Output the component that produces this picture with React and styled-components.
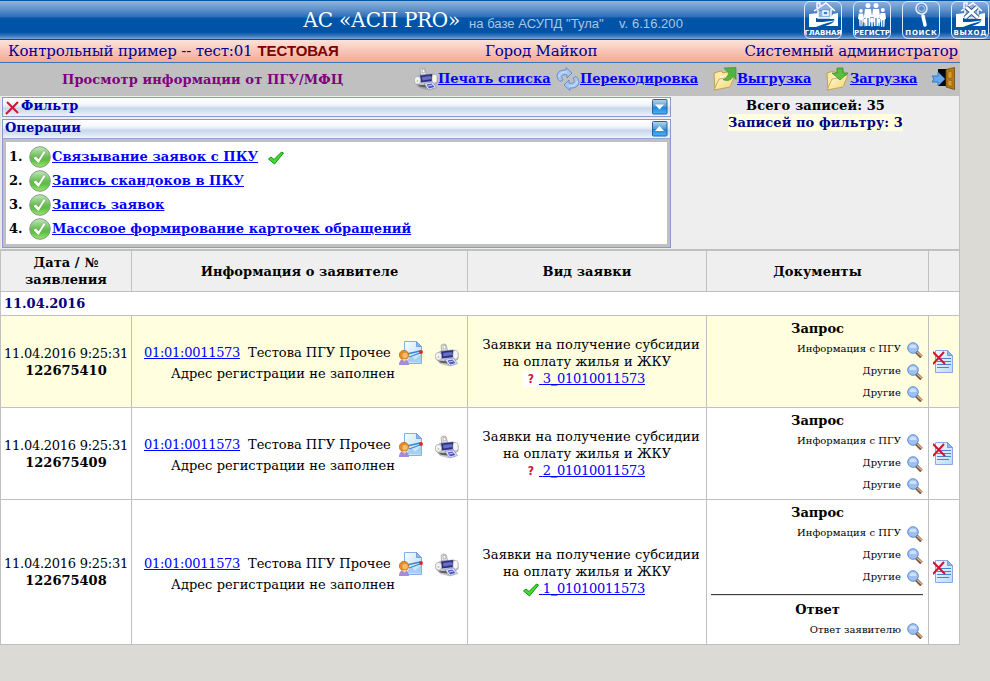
import React from 'react';
import styled, { createGlobalStyle } from 'styled-components';

const Global = createGlobalStyle`
  * { box-sizing: border-box; }
  body { margin: 0; background: #dbdad5; overflow: hidden; font: 13px/17px "DejaVu Serif", serif; color: #000; }
  svg { display: block; flex: none; }
`;

const Page = styled.div`min-height: 681px; white-space: nowrap;`;

/* ---------- top banner ---------- */
const Banner = styled.header`
  height: 40px; display: flex; align-items: center; padding-left: 303px; padding-right: 1px;
  border-top: 1px solid #0054a4; border-bottom: 1px solid #00509c;
  background: linear-gradient(#90b4de 0, #5c8fca 9px, #2b6db6 16px, #0055a8 17px, #0052a5 31px, #3b78bd 35px, #7da5d6 38px);
`;
const Title = styled.h1`margin: 0; width: 166px; font-size: 20px; font-weight: 400; line-height: 36px; letter-spacing: -0.3px; color: #fff;`;
const Subtitle = styled.span`
  width: ${p => p.$w}px; padding-top: 6px; font: 13px/17px "Liberation Sans", sans-serif; letter-spacing: 0.05px; color: #a9c6e8;
`;
const NavList = styled.nav`margin-left: auto; display: flex; gap: 11px; height: 38px;`;
const NavButton = styled.a`
  width: 38px; height: 38px; display: flex; flex-direction: column; align-items: center; overflow: hidden;
  border: 1px solid #dce9f8; border-radius: 6px; color: #fff;
`;
const NavLabel = styled.span`
  font: bold 7px/9px "DejaVu Sans", sans-serif; letter-spacing: ${p => p.$gap}px; margin-right: -${p => Math.max(p.$gap, 0)}px; margin-top: 1px;
`;

/* ---------- info strip and toolbar ---------- */
const InfoBar = styled.div`
  width: 960px; height: 23px; display: grid; grid-template-columns: 485px 1fr auto; align-items: center;
  padding: 0 2px 0 0; border-bottom: 1px solid #4076af; font-size: 15px; line-height: 20px; letter-spacing: -0.17px; color: #000099;
  background: linear-gradient(#fbe2da, #f4a994);
`;
const InfoBase = styled.span`padding-left: 8px; display: flex; gap: 5px;`;
const TestMark = styled.b`font: bold 15px/20px "Liberation Sans", sans-serif; letter-spacing: -0.05px; color: #800000;`;

const Toolbar = styled.div`
  width: 960px; height: 33px; display: flex; align-items: center; background: #c0c0c0;
`;
const PageTitle = styled.h2`margin: 0; padding-left: 62px; width: 414px; font-size: 13px; line-height: 17px; letter-spacing: 0.1px; color: #800080;`;
const ToolItem = styled.div`width: ${p => p.$w}px; display: flex; align-items: center; padding-bottom: 1px; letter-spacing: ${p => p.$track || 0}px;`;
const Link = styled.a`color: #0000ff; text-decoration: underline;`;
const CodeLink = styled(Link)`letter-spacing: -0.28px;`;
const ToolLink = styled(Link)`font-weight: bold; line-height: 17px; padding-bottom: 1px;`;

/* ---------- filter panels ---------- */
const Upper = styled.section`
  width: 960px; height: 154px; display: flex; background: #eee;
  border-right: 1px solid #c0c0c0; border-bottom: 1px solid #c0c0c0; border-left: 1px solid #e4e4e4;
`;
const Panels = styled.div`width: 670px; padding: 1px 0 0 1px; display: flex; flex-direction: column; gap: 2px;`;
const Panel = styled.div`border: 1px solid #879bcb; background: #c0c0c0;`;
const PanelHead = styled.div`
  height: ${p => p.$h}px; display: flex; align-items: center; padding: 0 2px 0 2px;
  font-weight: bold; color: #0000b0;
  border-bottom: ${p => (p.$line ? '1px solid #8fabd4' : '0')};
  background: linear-gradient(#fff 0, #f4f8fc 6px, #dce7f2 9px, #c7d7ea 10px, #d7e3f0 14px, #eef4fa 18px);
`;
const PanelName = styled.span`flex: 1; height: 19px; line-height: 16px; letter-spacing: 0.05px;`;
const Operations = styled.ol`
  margin: 3px; height: 102px; padding: 3px 3px; list-style: none; background: #fff; font-weight: bold; letter-spacing: 0.06px;
`;
const Operation = styled.li`height: 24px; display: flex; align-items: center;`;
const Num = styled.span`width: 19px; line-height: 17px; padding-bottom: 1px;`;
const DoneMark = styled.span`padding-left: 10px; padding-top: 1px;`;
const Totals = styled.div`flex: 1; padding-top: 1px; display: flex; flex-direction: column; align-items: center; font-weight: bold; letter-spacing: 0.08px; margin-right: -1px;`;
const Filtered = styled.span`background: #ffffe0; color: #000080;`;

/* ---------- requests table ---------- */
const Table = styled.div`
  width: 960px; display: grid; grid-template-columns: 130px 335px 238px 221px 30px; gap: 1px;
  padding: 1px; background: #c0c0c0;
`;
const Cell = styled.div`
  min-height: ${p => p.$h}px; display: flex; flex-direction: column; justify-content: center; align-items: center; text-align: center;
  padding-bottom: ${p => p.$bottom || 0}px; background: ${p => (p.$hot ? '#ffffe0' : '#fff')};
`;
const HeadCell = styled(Cell)`background: #efefef; font-weight: bold; letter-spacing: 0.06px;`;
const DayRow = styled.div`
  grid-column: 1 / -1; height: 23px; padding-left: 3px; line-height: 23px; font-weight: bold; color: #000080; background: #fff;
`;
const DateTime = styled.span`letter-spacing: -0.26px;`;
const Kind = styled.span`letter-spacing: ${p => p.$track}px;`;
const InfoCell = styled(Cell)`align-items: stretch; text-align: left;`;
const Person = styled.div`height: 26px; display: flex; align-items: center; padding-left: 12px;`;
const PersonCode = styled.span`width: 96px; padding-bottom: 1px;`;
const PersonName = styled.span`width: 159px; padding-left: 8px; padding-bottom: 1px;`;
const IconSlot = styled.span`width: ${p => p.$w}px; padding-top: ${p => p.$top || 0}px;`;
const Address = styled.div`padding-left: 39px; height: 17px; line-height: 15px; letter-spacing: 0.06px;`;
const RequestLine = styled.div`height: 17px; display: flex; align-items: center; padding-right: 6px;`;
const MarkSlot = styled.span`padding-top: ${p => (p.$low ? 3 : 1)}px;`;
const Docs = styled(Cell)`justify-content: flex-start; align-items: stretch; padding: 4px 5px 3px 4px;`;
const DocTitle = styled.b`line-height: 17px; height: 18px; padding-left: 1px;`;
const DocRow = styled.div`
  height: 22px; display: flex; align-items: center; justify-content: flex-end; gap: 6px; font-size: 10px; line-height: 14px; letter-spacing: 0.05px;
`;
const DocIcon = styled.span`padding-top: 1px;`;
const Rule = styled.hr`width: 100%; height: 2px; margin: 6px 0 5px; border: 0; border-top: 1px solid #404040; border-bottom: 1px solid #dedede;`;
const DeleteCell = styled(Cell)`align-items: flex-start; padding-left: 4px;`;

/* ---------- icons ---------- */
const Printer = () => (
  <svg width="24" height="24" viewBox="0 0 24 24">
    <path d="M3 18l4-1 14 1-1 4-7 1-8-2z" fill="#777" opacity=".4" />
    <path d="M6 2.500l2-1.500 3 .5L13 9l-6 1z" fill="#e4e4e6" stroke="#999" strokeWidth=".7" />
    <path d="M8 2.500h2.500l.5 3-2.500.5z" fill="#fff" stroke="#999" strokeWidth=".6" />
    <path d="M1 11l5-3 13-1 4 3v6l-5 3-13 .5-4-3.500z" fill="#c9c9d2" stroke="#8b8b93" strokeWidth=".7" />
    <path d="M6 8.500l12-1.500 1.500 7-13 1.500z" fill="#2f2f8a" />
    <path d="M8 10l8.500-1 1.500 3-9.500 1.500z" fill="#6671c0" />
    <rect x=".5" y="9.500" width="6" height="7.500" rx="2.800" fill="#f3f3f4" stroke="#999" strokeWidth=".5" />
    <rect x="18" y="7.500" width="5" height="8.500" rx="2.300" fill="#f6f6f8" stroke="#999" strokeWidth=".5" />
    <path d="M3 17.500l5 .5 4-.5v3l-5-.5z" fill="#5f5f66" />
    <path d="M10 16.500l8.500-1.500 4 5.500-8 2.500z" fill="#e6e9ff" stroke="#777eb5" strokeWidth=".6" />
    <path d="M12.500 17.500l5-1 3 3.500-5.500 1.500z" fill="#4f58bd" /><path d="M14 19l4.500-1" stroke="#c9cffa" />
    <circle cx="3.500" cy="14" r=".8" fill="#93b855" />
  </svg>
);
const Recycle = () => (
  <svg width="24" height="24" viewBox="0 0 24 24" fill="#a5c5ef" stroke="#5f8bcb" strokeWidth=".9" strokeLinejoin="round">
    <path d="M4 14.500C-1.500 10 1 2 10 3V.5L16 6l-5 5V8C6 7 4.500 9 7 13z" />
    <path d="M20 9.500c5.500 4.500 3 12.500-6 11.500v2.500L8 18l5-5v3c5 1 6.500-1 4-5z" />
    <path d="M3 10c0-3 3-5.500 8-5M21 14c0 3-3 5.500-8 5" fill="none" stroke="#dceaff" />
  </svg>
);
const Folder = ({ out }) => (
  <svg width="24" height="24" viewBox="0 0 24 24">
    <defs><linearGradient id="folder" x2="1" y2="1"><stop stopColor="#fffbd8" /><stop offset="1" stopColor="#f2d272" /></linearGradient></defs>
    <path d="M1 6l7-2 2 2 8-2v13L2 23z" fill="#fbeca4" stroke="#b99034" strokeWidth=".8" />
    <path d="M7 9h11v11H6z" fill="#f9f6dc" />
    <path d="M1 23l5-11 6-1 2-2 8-1-5 12z" fill="url(#folder)" stroke="#c29a3a" strokeWidth=".8" />
    {out
      ? <path d="M11 1l12-.5v12l-3-3c-2 4-6 5-10 3 4-1 6-4 5-7z" fill="#43b133" stroke="#278c24" strokeWidth=".7" opacity=".88" />
      : <path d="M11 1h6v5h5l-8 7-8-7h5z" fill="#4fbd36" stroke="#278c24" strokeWidth=".8" opacity=".93" />}
  </svg>
);
const Door = () => (
  <svg width="24" height="24" viewBox="0 0 24 24">
    <path d="M6 2h12v17H6z" fill="#050505" />
    <path d="M14 2.500L22.500.5v22L14 20z" fill="#b87912" stroke="#704709" strokeWidth=".8" />
    <path d="M16 5l4-1v7l-4 .5zm0 8l4 .5v6l-4-1z" fill="#d89b2d" stroke="#875a13" strokeWidth=".6" />
    <path d="M0 9h6V5l7 7-7 7v-4H0l2-3z" fill="#62a7ef" stroke="#256bb7" strokeWidth=".8" />
  </svg>
);
const Cross = () => (
  <svg width="16" height="16" viewBox="0 0 16 16"><path d="M2 3l11 11M13 3L1 15" stroke="#d01432" strokeWidth="2" fill="none" /></svg>
);
const Tick = () => (
  <svg width="16" height="16" viewBox="0 0 16 16"><path d="M.5 9l2.500-2L6 9.500 13.500 2l2 1L6.500 14z" fill="#42dc2c" stroke="#109216" strokeWidth="1" strokeLinejoin="round" /></svg>
);
const RoundTick = () => (
  <svg width="24" height="24" viewBox="0 0 24 24">
    <defs><linearGradient id="disc" x2="0" y2="1"><stop stopColor="#c5e8bd" /><stop offset=".5" stopColor="#68bd54" /><stop offset=".65" stopColor="#57c03f" /><stop offset="1" stopColor="#a5e675" /></linearGradient></defs>
    <circle cx="12" cy="12" r="10.300" fill="url(#disc)" stroke="#829e80" strokeWidth="1" />
    <path d="M5 13l3-2 2.500 3L15.500 5.500 18 7l-7.500 11.500z" fill="#fff" stroke="#4c9b40" strokeWidth=".5" />
  </svg>
);
const Fold = ({ up }) => (
  <svg width="16" height="16" viewBox="0 0 16 16">
    <defs><linearGradient id="fold" x2="0" y2="1"><stop stopColor="#b8d6f2" /><stop offset=".5" stopColor="#5398da" /><stop offset=".55" stopColor="#2186d9" /><stop offset="1" stopColor="#4bb4ff" /></linearGradient></defs>
    <rect x=".5" y=".5" width="14.500" height="14.500" rx="1" fill="url(#fold)" stroke="#24639f" />
    <path d={up ? 'M3 10l4.500-5 4.500 5z' : 'M3 5.500l4.500 5 4.500-5z'} fill="#fff" />
  </svg>
);
const Magnifier = () => (
  <svg width="16" height="16" viewBox="0 0 16 16">
    <path d="M9 9.500l5.500 5.500" stroke="#76533d" strokeWidth="3.500" /><path d="M10 10l5 4.500" stroke="#dcb68d" strokeWidth="1.400" />
    <circle cx="6" cy="6" r="5.300" fill="#9dbff4" stroke="#6090ce" /><path d="M2.500 6a3.500 3.500 0 017 0z" fill="#cfe0fc" />
  </svg>
);
const SheetGradient = () => (
  <defs><linearGradient id="sheet" x2="1" y2="1"><stop stopColor="#f7fcff" /><stop offset="1" stopColor="#b8daf7" /></linearGradient></defs>
);
const Certificate = () => (
  <svg width="25" height="24" viewBox="0 0 25 24">
    <SheetGradient />
    <path d="M5.500.5h12l5 5v17h-17z" fill="url(#sheet)" stroke="#84aee6" />
    <path d="M17.500.5v5h5z" fill="#8bb6ee" stroke="#759fd8" />
    <path d="M9 18l4-3 3 4 6-6v8H8z" fill="#a7cff2" />
    <path d="M8 13l13-3M10 16l11-4" stroke="#3b83cb" strokeWidth="1.300" />
    <circle cx="22" cy="11" r="1.900" fill="#d52725" />
    <path d="M0 24c0-5 3-6 5-6s5 2 5 6z" fill="#a68bd9" />
    <circle cx="5" cy="14" r="4.700" fill="#e28b29" stroke="#bb6517" strokeWidth=".7" /><circle cx="6" cy="14.500" r="2.700" fill="#f7bc63" />
    <path d="M3 18l2.500 3L8 18" fill="#edcba8" />
  </svg>
);
const DeleteSheet = () => (
  <svg width="21" height="24" viewBox="0 0 21 24">
    <SheetGradient />
    <path d="M2.500.5h12l5 5v17h-17z" fill="url(#sheet)" stroke="#8fa6e6" />
    <path d="M14.500.5v5h5z" fill="#8bb6ee" stroke="#759fd8" />
    <path d="M6 8.500h12M4 11.500h14M4 14.500h14M4 17.500h12" stroke="#4b83cf" strokeWidth="1" />
    <path d="M0 2l12 12M11 2L0 14" stroke="#d01432" strokeWidth="2" />
  </svg>
);
const Question = styled.span`
  display: block; width: 16px; height: 16px; background: #fff; color: #d01432; text-align: center; font: bold 12px/16px "DejaVu Sans Condensed", "DejaVu Sans", sans-serif;
`;
const House = () => (
  <>
    <path d="M-1 12l11-1v5h-3v4h7l15-2-14 4-8 3H-1z" fill="#fff" />
    <path d="M24 12l5-1v13H16c7-2 11-5 9-7l-4 0z" fill="#fff" />
    <path d="M5 9L17 1l9 8M9 8v8h13V7M14 9h5v4h-5zM8 6V1h3v3" fill="#8db2df" stroke="#fff" strokeWidth="1.400" />
  </>
);
const Adult = ({ x, y, s = 1 }) => (
  <g transform={`translate(${x} ${y}) scale(${s})`} fill="#fff"><circle cx="4" cy="2.500" r="2.500" /><path d="M1 6h6l1 7-1.500 1L6 23H4.500V15h-1v8H2L1.500 14 0 13z" /></g>
);
const navArt = {
  home: <House />,
  people: <><Adult x={0} y={7} s={0.75} /><Adult x={6} y={1} /><Adult x={14} y={1} /><Adult x={21.5} y={6} s={0.82} /><Adult x={5} y={14} s={0.45} /><Adult x={12} y={13} s={0.5} /><Adult x={19} y={14} s={0.45} /></>,
  search: <><path d="M16 14l2 9" stroke="#fff" strokeWidth="3.500" strokeLinecap="round" /><circle cx="14.500" cy="6.500" r="5.500" fill="#5d8dc7" stroke="#e4eefa" strokeWidth="1.500" /><circle cx="14.500" cy="6.500" r="3" fill="none" stroke="#b4cdea" /></>,
  exit: <><House /><path d="M10 5l12 11M21 5L9 16" stroke="#24578f" strokeWidth="4.500" /><path d="M10 5l12 11M21 5L9 16" stroke="#fff" strokeWidth="2.800" /></>,
};

const nav = [['home', 'ГЛАВНАЯ', -0.1], ['people', 'РЕГИСТР', 0.1], ['search', 'ПОИСК', 0.7], ['exit', 'ВЫХОД', 0.7]];
const operations = ['Связывание заявок с ПКУ', 'Запись скандоков в ПКУ', 'Запись заявок', 'Массовое формирование карточек обращений'];
const requests = [
  { id: '122675410', n: 3, hot: true, h: 91 },
  { id: '122675409', n: 2, h: 91 },
  { id: '122675408', n: 1, h: 144, answered: true },
];

const Doc = ({ children }) => <DocRow><span>{children}</span><DocIcon><Magnifier /></DocIcon></DocRow>;

const Request = ({ id, n, hot, h, answered }) => (
  <>
    <Cell $h={h} $hot={hot}><DateTime>11.04.2016 9:25:31</DateTime><b>{id}</b></Cell>
    <InfoCell $h={h} $hot={hot}>
      <Person>
        <PersonCode><CodeLink>01:01:0011573</CodeLink></PersonCode><PersonName>Тестова ПГУ Прочее</PersonName>
        <IconSlot $w={36}><Certificate /></IconSlot><IconSlot $w={24} $top={3}><Printer /></IconSlot>
      </Person>
      <Address>Адрес регистрации не заполнен</Address>
    </InfoCell>
    <Cell $h={h} $hot={hot} $bottom={answered ? 2 : 0}>
      <Kind $track={0.09}>&nbsp;&nbsp;Заявки на получение субсидии</Kind><Kind $track={0.05}>на оплату жилья и ЖКУ</Kind>
      <RequestLine>
        <MarkSlot $low={answered}>{answered ? <Tick /> : <Question>?</Question>}</MarkSlot>
        <CodeLink>&nbsp;{n}_01010011573</CodeLink>
      </RequestLine>
    </Cell>
    <Docs $h={h} $hot={hot}>
      <DocTitle>Запрос</DocTitle>
      <Doc>Информация с ПГУ</Doc><Doc>Другие</Doc><Doc>Другие</Doc>
      {answered && <><Rule /><DocTitle>Ответ</DocTitle><Doc>Ответ заявителю</Doc></>}
    </Docs>
    <DeleteCell $h={h} $hot={hot}><DeleteSheet /></DeleteCell>
  </>
);

export default function App() {
  return (
    <Page>
      <Global />
      <Banner>
        <Title>АС «АСП PRO»</Title>
        <Subtitle $w={150}>на базе АСУПД "Тула"</Subtitle><Subtitle $w={70}>v. 6.16.200</Subtitle>
        <NavList>
          {nav.map(([art, label, gap]) => (
            <NavButton key={art}>
              <svg width="29" height="26" viewBox="0 0 29 26">{navArt[art]}</svg>
              <NavLabel $gap={gap}>{label}</NavLabel>
            </NavButton>
          ))}
        </NavList>
      </Banner>
      <InfoBar>
        <InfoBase><span>Контрольный пример -- тест:01</span><TestMark>ТЕСТОВАЯ</TestMark></InfoBase>
        <span>Город Майкоп</span><span>Системный администратор</span>
      </InfoBar>
      <Toolbar>
        <PageTitle>Просмотр информации от ПГУ/МФЦ</PageTitle>
        <ToolItem $w={142}><Printer /><ToolLink>Печать списка</ToolLink></ToolItem>
        <ToolItem $w={157} $track={-0.06}><Recycle /><ToolLink>Перекодировка</ToolLink></ToolItem>
        <ToolItem $w={113} $track={-0.15}><Folder out /><ToolLink>Выгрузка</ToolLink></ToolItem>
        <ToolItem $w={106} $track={-0.25}><Folder /><ToolLink>Загрузка</ToolLink></ToolItem>
        <ToolItem $w={24}><Door /></ToolItem>
      </Toolbar>
      <Upper>
        <Panels>
          <Panel><PanelHead $h={18}><Cross /><PanelName>Фильтр</PanelName><Fold /></PanelHead></Panel>
          <Panel>
            <PanelHead $h={19} $line><PanelName>Операции</PanelName><Fold up /></PanelHead>
            <Operations>
              {operations.map((name, i) => (
                <Operation key={name}>
                  <Num>{i + 1}.</Num><RoundTick /><ToolLink>{name}</ToolLink>
                  {i === 0 && <DoneMark><Tick /></DoneMark>}
                </Operation>
              ))}
            </Operations>
          </Panel>
        </Panels>
        <Totals><span>Всего записей: 35</span><Filtered>Записей по фильтру: 3</Filtered></Totals>
      </Upper>
      <Table>
        <HeadCell $h={40}><span>Дата / №</span><span>заявления</span></HeadCell>
        <HeadCell>Информация о заявителе</HeadCell><HeadCell>Вид заявки</HeadCell><HeadCell>Документы</HeadCell><HeadCell />
        <DayRow>11.04.2016</DayRow>
        {requests.map(r => <Request key={r.id} {...r} />)}
      </Table>
    </Page>
  );
}
